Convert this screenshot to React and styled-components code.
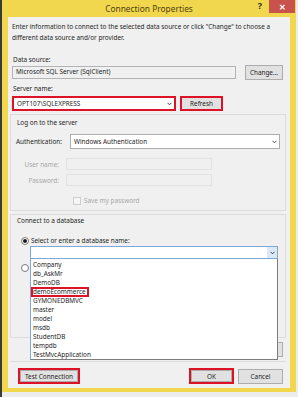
import React from "react";
import styled, { createGlobalStyle } from "styled-components";

const Global = createGlobalStyle`
  html, body { margin: 0; padding: 0; background: #e9e9e9; }
  * { box-sizing: border-box; }
  body { font-family: "Noto Sans", "Open Sans", sans-serif; }
`;

const Page = styled.div`
  width: 298px;
  height: 397px;
  background: #ececec;
  border-left: 2px solid #3a3a3a;
  overflow: hidden;
`;

const Frame = styled.div`
  width: 294px;
  height: 392px;
  background: #f1d74e;
  padding: 0 6px 4px 6px;
  display: flex;
  flex-direction: column;
`;

const TitleBar = styled.div`
  height: 17px;
  position: relative;
  display: flex;
  align-items: center;
  justify-content: center;
  font-size: 8.4px;
  color: #4f430f;
`;

const TitleButtons = styled.div`
  position: absolute;
  right: -5px;
  top: 0;
  display: flex;
  align-items: flex-start;
  height: 14px;
`;

const Help = styled.span`
  font-weight: bold;
  font-size: 9px;
  color: #2b2b2b;
  margin-right: 7px;
  line-height: 12px;
`;

const Close = styled.div`
  width: 26px;
  height: 13px;
  background: #c9524c;
  color: #fff;
  font-size: 8px;
  font-weight: bold;
  display: flex;
  align-items: center;
  justify-content: center;
`;

const Content = styled.div`
  flex: 1;
  background: #f0f0f0;
  padding: 4px 7px 0 4px;
  font-size: 6.4px;
  color: #1e1e1e;
`;

const Intro = styled.p`
  margin: 0;
  line-height: 11px;
`;

const Label = styled.div`
  line-height: 10px;
  margin-top: ${(p) => p.$mt || 0}px;
  padding-left: 1px;
  color: ${(p) => (p.$disabled ? "#a8a8a8" : "#1e1e1e")};
`;

const Row = styled.div`
  display: flex;
  align-items: center;
  margin-top: ${(p) => p.$mt || 0}px;
`;

const Field = styled.div`
  width: ${(p) => p.$w}px;
  height: ${(p) => p.$h || 13}px;
  margin-left: ${(p) => p.$ml || 0}px;
  background: ${(p) => (p.$readonly ? "#f0f0f0" : "#fff")};
  border: 1px solid ${(p) => (p.$disabled ? "#e2e2e2" : "#b4b4b4")};
  display: flex;
  align-items: center;
  padding-left: 3px;
  line-height: 1;
`;

const Combo = styled.div`
  position: relative;
  width: ${(p) => p.$w}px;
  height: ${(p) => p.$h || 15}px;
  margin-left: ${(p) => p.$ml || 0}px;
  background: #fff;
  border: ${(p) => (p.$red ? "2px solid #dd1226" : p.$focus ? "1px solid #7fa8d6" : "1px solid #acacac")};
  display: flex;
  align-items: center;
  padding-left: 3px;
`;

const ComboText = styled.span`
  flex: 1;
`;

const Arrow = styled.div`
  width: 10px;
  height: 100%;
  display: flex;
  align-items: center;
  justify-content: center;
  background: ${(p) => (p.$focus ? "#dbe9f7" : "transparent")};
`;

const Button = styled.div`
  width: ${(p) => p.$w}px;
  height: ${(p) => p.$h || 15}px;
  margin-left: ${(p) => p.$ml || 0}px;
  background: #e1e1e1;
  border: ${(p) => (p.$red ? "2px solid #dd1226" : "1px solid #adadad")};
  display: flex;
  align-items: center;
  justify-content: center;
`;

const RedWrap = styled.div`
  border: 2px solid #dd1226;
  padding: 0;
  margin-left: ${(p) => p.$ml || 0}px;
`;

const Group = styled.div`
  margin: ${(p) => p.$mt || 0}px -3px 0 -2px;
  height: ${(p) => p.$h}px;
  border: 1px solid #dcdcdc;
  padding: 1px 5px 0 5px;
`;

const AuthLabel = styled.span`
  width: 54px;
`;

const SideLabel = styled.span`
  width: 50px;
  text-align: right;
  padding-right: 7px;
  color: #a8a8a8;
`;

const CheckRow = styled.div`
  display: flex;
  align-items: center;
  margin: 10px 0 0 57px;
  color: #a8a8a8;
`;

const Box = styled.span`
  width: 8px;
  height: 8px;
  border: 1px solid #cfcfcf;
  background: #f4f4f4;
  margin-right: 3px;
`;

const RadioRow = styled.div`
  display: flex;
  align-items: center;
  margin: ${(p) => p.$mt || 0}px 0 0 5px;
`;

const Radio = styled.span`
  width: 8px;
  height: 8px;
  border-radius: 50%;
  border: 1px solid #7a7a7a;
  background: #fff;
  margin-right: 2px;
  display: flex;
  align-items: center;
  justify-content: center;
  &::after {
    content: "";
    width: 4px;
    height: 4px;
    border-radius: 50%;
    background: ${(p) => (p.$on ? "#1c1c1c" : "transparent")};
  }
`;

const DbIndent = styled.div`
  margin: 1px 0 0 14px;
`;

const DropList = styled.div`
  position: absolute;
  top: 12px;
  left: -1px;
  width: 248px;
  height: 101px;
  background: #fff;
  border: 1px solid #7c7c7c;
  border-left-color: #7fa8d6;
  border-top: none;
  padding-top: 1px;
  z-index: 2;
`;

const Item = styled.div`
  height: 9px;
  line-height: 9px;
  padding-left: 2px;
  color: #1e1e1e;
`;

const Marked = styled.span`
  display: inline-block;
  border: 2px solid #dd1226;
  line-height: 6px;
  margin-left: -2px;
  padding: 0 1px 0 0;
`;

const RightRow = styled.div`
  display: flex;
  justify-content: flex-end;
  margin-top: ${(p) => p.$mt || 0}px;
`;

const Separator = styled.div`
  height: 1px;
  background: #dcdcdc;
  margin: 4px -3px 0 -2px;
`;

const Footer = styled.div`
  display: flex;
  align-items: center;
  margin-top: 6px;
`;

const Spacer = styled.div`
  flex: 1;
`;

const Chevron = () => (
  <svg width="5" height="4" viewBox="0 0 5 4">
    <path d="M0.5 0.8 L2.5 2.8 L4.5 0.8" fill="none" stroke="#333" strokeWidth="0.9" />
  </svg>
);

const databases = [
  "Company",
  "db_AskMr",
  "DemoDB",
  "demoEcommerce",
  "GYMONEDBMVC",
  "master",
  "model",
  "msdb",
  "StudentDB",
  "tempdb",
  "TestMvcApplication",
];

export default function App() {
  return (
    <Page>
      <Global />
      <Frame>
        <TitleBar>
          Connection Properties
          <TitleButtons>
            <Help>?</Help>
            <Close>✕</Close>
          </TitleButtons>
        </TitleBar>
        <Content>
          <Intro>
            Enter information to connect to the selected data source or click "Change" to choose a
            different data source and/or provider.
          </Intro>

          <Label $mt={12}>Data source:</Label>
          <Row>
            <Field $w={224} $readonly>Microsoft SQL Server (SqlClient)</Field>
            <Button $w={38} $ml={9}>Change...</Button>
          </Row>

          <Label $mt={4}>Server name:</Label>
          <Row $mt={2}>
            <Combo $w={164} $red>
              <ComboText>OPT107\SQLEXPRESS</ComboText>
              <Arrow><Chevron /></Arrow>
            </Combo>
            <Button $w={43} $ml={4} $red>Refresh</Button>
          </Row>

          <Group $mt={3} $h={97}>
            <Label $mt={2}>Log on to the server</Label>
            <Row $mt={6}>
              <AuthLabel>Authentication:</AuthLabel>
              <Combo $w={210}>
                <ComboText>Windows Authentication</ComboText>
                <Arrow><Chevron /></Arrow>
              </Combo>
            </Row>
            <Row $mt={9}>
              <SideLabel>User name:</SideLabel>
              <Field $w={146} $h={12} $disabled $readonly />
            </Row>
            <Row $mt={4}>
              <SideLabel>Password:</SideLabel>
              <Field $w={146} $h={12} $disabled $readonly />
            </Row>
            <CheckRow>
              <Box />
              Save my password
            </CheckRow>
          </Group>

          <Group $mt={3} $h={124}>
            <Label $mt={0}>Connect to a database</Label>
            <RadioRow $mt={10}>
              <Radio $on />
              Select or enter a database name:
            </RadioRow>
            <DbIndent>
              <Combo $w={248} $h={13} $focus>
                <ComboText />
                <Arrow $focus><Chevron /></Arrow>
                <DropList>
                  {databases.map((d) => (
                    <Item key={d}>{d === "demoEcommerce" ? <Marked>{d}</Marked> : d}</Item>
                  ))}
                </DropList>
              </Combo>
            </DbIndent>
            <RadioRow $mt={5}>
              <Radio />
            </RadioRow>
          </Group>

          <RightRow $mt={4}>
            <Button $w={45}>Advanced...</Button>
          </RightRow>
          <Separator />

          <Footer>
            <RedWrap $ml={6}>
              <Button $w={58} $h={12}>Test Connection</Button>
            </RedWrap>
            <Spacer />
            <RedWrap>
              <Button $w={41} $h={12}>OK</Button>
            </RedWrap>
            <Button $w={45} $ml={4}>Cancel</Button>
          </Footer>
        </Content>
      </Frame>
    </Page>
  );
}
